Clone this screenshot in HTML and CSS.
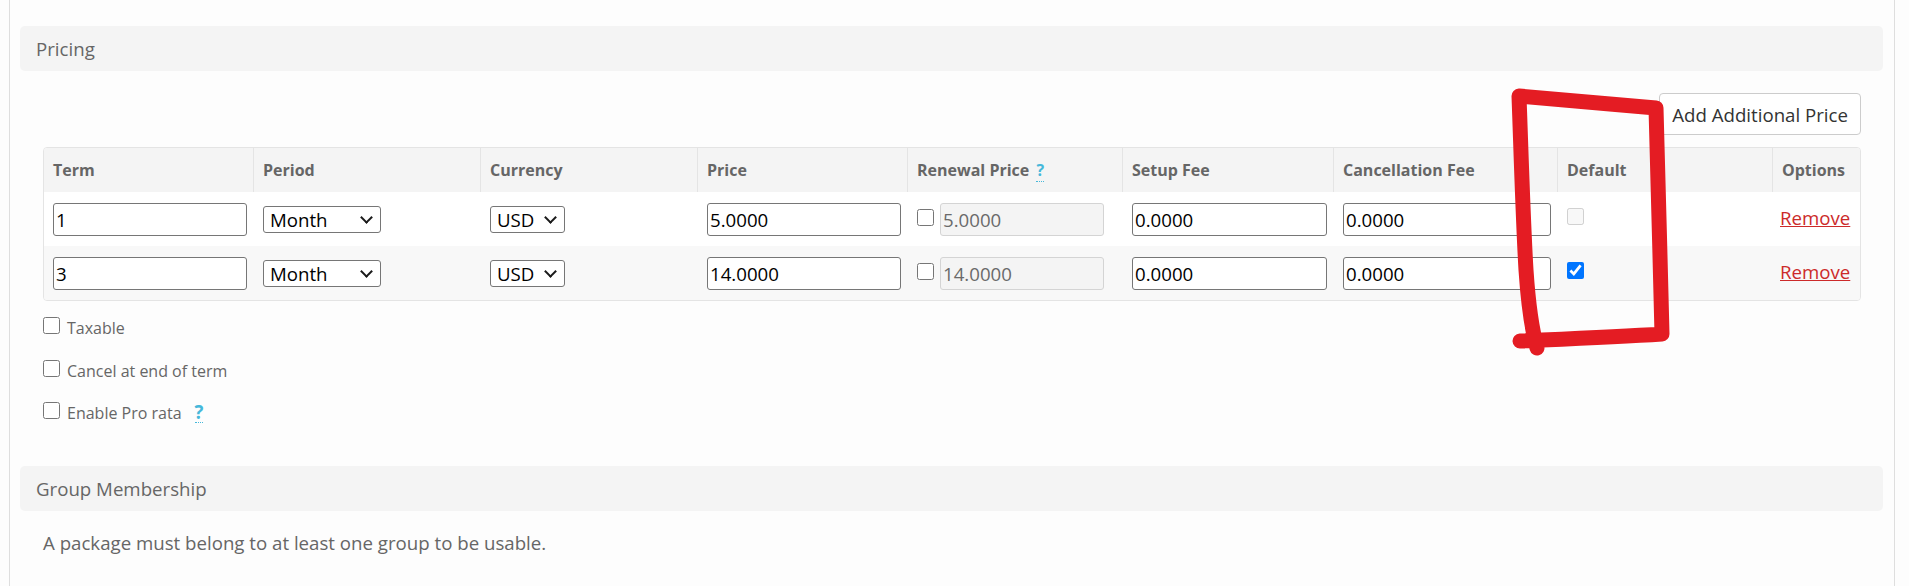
FILE: index.html
```html
<!DOCTYPE html>
<html lang="en">
<head>
  <meta charset="UTF-8" />
  <title>Pricing</title>
  <link rel="stylesheet" href="styles.css">
</head>
<body>
  <div class="panel">
    <div class="section-title">Pricing</div>
    <div class="section-body">
      <div class="toolbar">
        <button class="btn" type="button">Add Additional Price</button>
      </div>
      <table class="pricing">
        <colgroup>
          <col style="width: 209px">
          <col style="width: 227px">
          <col style="width: 217px">
          <col style="width: 210px">
          <col style="width: 215px">
          <col style="width: 211px">
          <col style="width: 224px">
          <col style="width: 215px">
          <col style="width: 88px">
        </colgroup>
        <thead>
          <tr>
            <th>Term</th>
            <th>Period</th>
            <th>Currency</th>
            <th>Price</th>
            <th>Renewal Price <span class="help">?</span></th>
            <th>Setup Fee</th>
            <th>Cancellation Fee</th>
            <th>Default</th>
            <th>Options</th>
          </tr>
        </thead>
        <tbody>
          <tr>
            <td><input class="field" type="text" value="1"></td>
            <td><span class="select-wrap"><select class="period"><option>Month</option></select></span></td>
            <td><span class="select-wrap"><select class="currency"><option>USD</option></select></span></td>
            <td><input class="field" type="text" value="5.0000"></td>
            <td>
              <div class="renewal">
                <input class="box" type="checkbox">
                <input class="field renewal-field" type="text" value="5.0000" disabled>
              </div>
            </td>
            <td><input class="field" type="text" value="0.0000"></td>
            <td><input class="field" type="text" value="0.0000"></td>
            <td><input class="box" type="checkbox" disabled></td>
            <td><a class="remove" href="#">Remove</a></td>
          </tr>
          <tr>
            <td><input class="field" type="text" value="3"></td>
            <td><span class="select-wrap"><select class="period"><option>Month</option></select></span></td>
            <td><span class="select-wrap"><select class="currency"><option>USD</option></select></span></td>
            <td><input class="field" type="text" value="14.0000"></td>
            <td>
              <div class="renewal">
                <input class="box" type="checkbox">
                <input class="field renewal-field" type="text" value="14.0000" disabled>
              </div>
            </td>
            <td><input class="field" type="text" value="0.0000"></td>
            <td><input class="field" type="text" value="0.0000"></td>
            <td><input class="box" type="checkbox" checked></td>
            <td><a class="remove" href="#">Remove</a></td>
          </tr>
        </tbody>
      </table>

      <div class="checks">
        <label class="check"><input type="checkbox"><span>Taxable</span></label>
        <label class="check"><input type="checkbox"><span>Cancel at end of term</span></label>
        <label class="check"><input type="checkbox"><span>Enable Pro rata</span><span class="help big">?</span></label>
      </div>
    </div>

    <div class="section-title group-title">Group Membership</div>
    <p class="note">A package must belong to at least one group to be usable.</p>
  </div>

  <!-- red marker drawn over the Default column -->
  <svg class="marker" width="1909" height="586" viewBox="0 0 1909 586">
    <path d="M1537 348 C1532 330 1528 300 1526 270 C1523 220 1521 150 1519 96 C1560 100 1610 104 1656 108 C1658 170 1660 260 1662 334 C1615 337 1565 339 1520 341"
          fill="none" stroke="#e41c23" stroke-width="15" stroke-linecap="round" stroke-linejoin="round"/>
  </svg>
</body>
</html>
```

FILE: styles.css
```css
* { margin: 0; padding: 0; box-sizing: border-box; }
html, body { background: #fdfdfd; font-family: "Open Sans", "Noto Sans", sans-serif; color: #666; }

.panel {
  margin-left: 9px;
  width: 1886px;
  min-height: 100vh;
  border-left: 1px solid #dedede;
  border-right: 1px solid #dedede;
  padding: 26px 11px 0 10px;
}

.section-title {
  height: 45px;
  line-height: 45px;
  padding-left: 16px;
  background: #f4f4f4;
  border-radius: 5px;
  font-size: 18.67px;
  color: #666;
}
.group-title { margin-top: 21px; }

.section-body {
  padding: 0 22px 0 23px;
}

.toolbar {
  display: flex;
  justify-content: flex-end;
  padding-top: 22px;
  margin-bottom: 12px;
}

.btn {
  height: 42px;
  padding: 0 12px;
  font-family: inherit;
  font-size: 18.67px;
  color: #333;
  background: #fff;
  border: 1px solid #ccc;
  border-radius: 4px;
}

.pricing {
  width: 1818px;
  table-layout: fixed;
  border-collapse: separate;
  border-spacing: 0;
  border: 1px solid #e4e4e4;
  border-radius: 4px;
  overflow: hidden;
}

.pricing th {
  height: 44px;
  padding: 0 9px;
  background: #f4f4f4;
  font-size: 16px;
  font-weight: 700;
  color: #666;
  text-align: left;
  white-space: nowrap;
}
.pricing th + th { border-left: 1px solid #e4e4e4; }

.pricing td {
  height: 54px;
  padding: 0 6px 0 10px;
  background: #fff;
  vertical-align: middle;
}
.pricing tbody tr:nth-child(2) td { background: #f8f8f8; }
.pricing td:first-child { padding-left: 9px; }
.pricing td:last-child { padding-left: 8px; padding-bottom: 3px; }

.field {
  display: block;
  width: 100%;
  height: 33px;
  padding: 0 2px;
  font-family: "Open Sans", "Noto Sans", sans-serif;
  font-size: 18.67px;
  color: #000;
  background: #fff;
  border: 1px solid #767676;
  border-radius: 3px;
}

.field:disabled {
  background: #f4f4f4;
  border-color: #d4d4d4;
  color: #6a6a6a;
}

.select-wrap {
  position: relative;
  display: inline-block;
  vertical-align: middle;
}
.select-wrap::after {
  content: "";
  position: absolute;
  right: 10px;
  top: 50%;
  width: 7px;
  height: 7px;
  margin-top: -6px;
  border-right: 2px solid #1a1a1a;
  border-bottom: 2px solid #1a1a1a;
  transform: rotate(45deg);
  pointer-events: none;
}

select {
  display: block;
  appearance: none;
  -webkit-appearance: none;
  height: 27px;
  padding: 0 0 0 6px;
  font-family: "Open Sans", "Noto Sans", sans-serif;
  font-size: 18.67px;
  color: #000;
  background: #fff;
  border: 1px solid #767676;
  border-radius: 3px;
}
.period { width: 118px; }
.currency { width: 75px; }

.renewal {
  display: flex;
  align-items: center;
  gap: 6px;
}
.renewal-field { width: 164px; }

.box {
  width: 17px;
  height: 17px;
  margin: 0 0 6px 0;
  vertical-align: middle;
}
.renewal .box { flex: none; margin-bottom: 3px; }

.remove {
  font-size: 18.67px;
  color: #cc2a2a;
  text-decoration: underline;
}

.help {
  margin-left: 3px;
  color: #46b8da;
  font-weight: 700;
  border-bottom: 1px dotted #46b8da;
}
.help.big {
  margin-left: 13px;
  font-size: 18.67px;
  line-height: 20px;
}

.checks {
  margin-top: 16px;
}

.check {
  display: flex;
  align-items: baseline;
  height: 42.5px;
  font-size: 16px;
  color: #666;
}
.check input {
  width: 17px;
  height: 17px;
  margin: 0 7px 2px 0;
}

.note {
  margin: 19px 0 0 23px;
  font-size: 18.67px;
  line-height: 26px;
  color: #666;
}

.marker {
  position: absolute;
  top: 0;
  left: 0;
  pointer-events: none;
}
```
